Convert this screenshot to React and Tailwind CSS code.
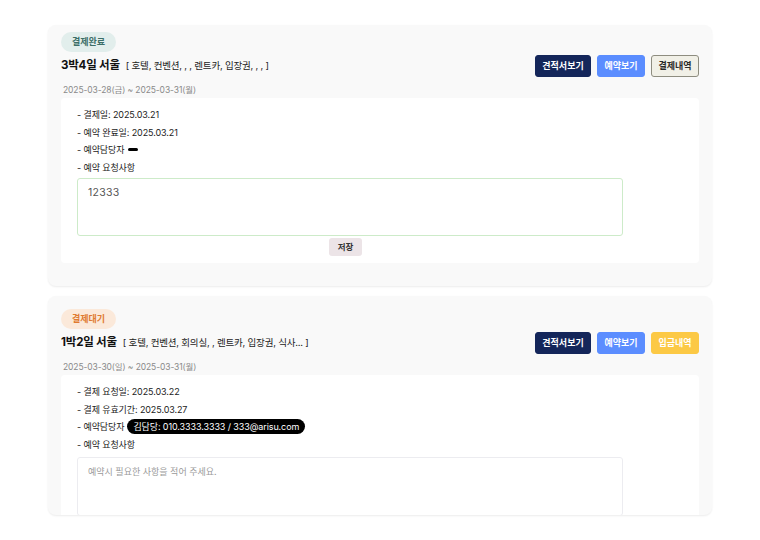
import React from 'react';

const font = { fontFamily: 'Inter, "Noto Sans CJK KR", sans-serif' };

const Badge = ({ tone, children }) => {
  const tones = {
    done: 'bg-[#e2eeec] text-[#3c6e68]',
    wait: 'bg-[#fbe9da] text-[#e07b32]',
  };
  return (
    <span className={`inline-flex items-center justify-center h-[20px] w-[55px] rounded-full text-[9px] font-bold ${tones[tone]}`}>
      {children}
    </span>
  );
};

const Btn = ({ kind, w, children }) => {
  const kinds = {
    navy: 'bg-[#14265a] text-white border-[#14265a]',
    blue: 'bg-[#5b8dff] text-white border-[#5b8dff]',
    beige: 'bg-[#f1f0e7] text-[#2a2a2a] border-[#8e8d80]',
    yellow: 'bg-[#fcc945] text-white border-[#fcc945]',
  };
  return (
    <button className={`h-[22px] ${w} rounded-[3px] border text-[9px] font-bold ${kinds[kind]}`}>
      {children}
    </button>
  );
};

const Line = ({ children }) => (
  <div className="h-[17.5px] flex items-center text-[9px] text-[#222] tracking-[-0.1px]">{children}</div>
);

const BookingCard = ({ badge, title, tags, dates, lastBtn, top, clip, children }) => (
  <div className={`bg-[#f9f9f9] rounded-lg shadow-[0_1px_2px_rgba(0,0,0,0.08)] px-[13px] ${top} ${clip ? 'h-[219px] overflow-hidden' : 'pb-[23px]'}`}>
    <div className="flex">{badge}</div>
    <div className="mt-[3px] flex items-center justify-between h-[22px]">
      <div className="flex items-baseline gap-[6px]">
        <span className="text-[11.5px] font-bold text-[#111] tracking-[-0.2px]">{title}</span>
        <span className="text-[9.5px] text-[#222] tracking-[-0.2px]">{tags}</span>
      </div>
      <div className="flex gap-[6px]">
        <Btn kind="navy" w="w-[56px]">견적서보기</Btn>
        <Btn kind="blue" w="w-[48px]">예약보기</Btn>
        {lastBtn}
      </div>
    </div>
    <div className="mt-[7px] pl-[2px] text-[8.5px] text-[#8a8a8a] leading-[12px] tracking-[-0.1px]">{dates}</div>
    <div className="mt-[2px] bg-white rounded-[4px] pl-[16px] pr-[76px] pt-[8px] pb-[7px]">
      {children}
    </div>
  </div>
);

export default function App() {
  return (
    <div style={font} className="w-[760px] h-[540px] bg-white px-[48px] pt-[25px] overflow-hidden">
      <BookingCard
        top="pt-[7px]"
        badge={<Badge tone="done">결제완료</Badge>}
        title="3박4일 서울"
        tags="[ 호텔, 컨벤션, , , 렌트카, 입장권, , , ]"
        dates="2025-03-28(금) ~ 2025-03-31(월)"
        lastBtn={<Btn kind="beige" w="w-[48px]">결제내역</Btn>}
      >
        <Line>- 결제일: 2025.03.21</Line>
        <Line>- 예약 완료일: 2025.03.21</Line>
        <Line>
          - 예약담당자
          <span className="ml-[4px] inline-block w-[10px] h-[3px] rounded-full bg-black" />
        </Line>
        <Line>- 예약 요청사항</Line>
        <textarea
          readOnly
          defaultValue="12333"
          className="mt-[2px] block w-full h-[58px] rounded-[3px] border border-[#cdebc9] px-[10px] py-[6px] text-[10.5px] text-[#555] tracking-[0.3px] resize-none outline-none"
        />
        <div className="flex justify-center pr-[9px] mt-[2px]">
          <button className="h-[18px] w-[33px] rounded-[3px] bg-[#ece4e7] text-[8.5px] font-bold text-[#333]">저장</button>
        </div>
      </BookingCard>

      <div className="h-[10px]" />

      <BookingCard
        clip
        top="pt-[13px]"
        badge={<Badge tone="wait">결제대기</Badge>}
        title="1박2일 서울"
        tags="[ 호텔, 컨벤션, 회의실, , 렌트카, 입장권, 식사... ]"
        dates="2025-03-30(일) ~ 2025-03-31(월)"
        lastBtn={<Btn kind="yellow" w="w-[48px]">입금내역</Btn>}
      >
        <Line>- 결제 요청일: 2025.03.22</Line>
        <Line>- 결제 유효기간: 2025.03.27</Line>
        <Line>
          - 예약담당자
          <span className="ml-[3px] inline-flex items-center h-[15px] px-[6px] rounded-full bg-black text-white text-[9px]">
            김담당: 010.3333.3333 / 333@arisu.com
          </span>
        </Line>
        <Line>- 예약 요청사항</Line>
        <textarea
          readOnly
          placeholder="예약시 필요한 사항을 적어 주세요."
          className="mt-[4px] block w-full h-[59px] rounded-[3px] border border-[#ececf0] px-[10px] py-[7px] text-[9px] text-[#555] placeholder:text-[#9a9a9a] resize-none outline-none"
        />
      </BookingCard>
    </div>
  );
}
